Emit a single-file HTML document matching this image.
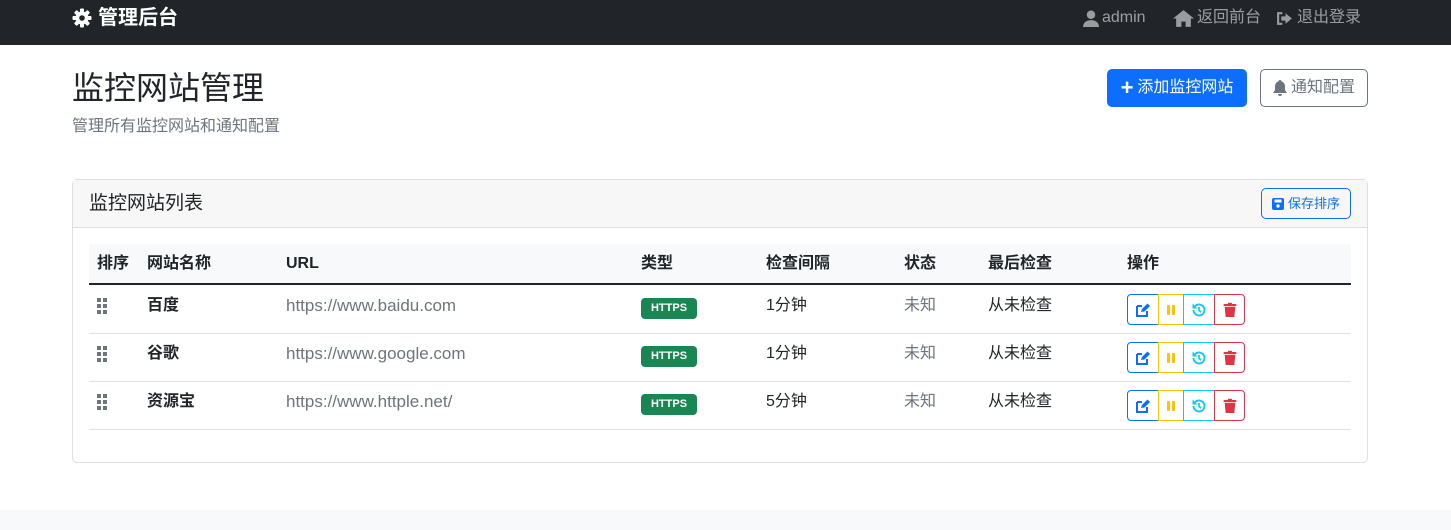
<!DOCTYPE html>
<html><head><meta charset="utf-8"><style>
*{box-sizing:border-box;margin:0;padding:0}
body{width:1451px;height:530px;overflow:hidden;background:#fff;font-family:"Liberation Sans","Noto Sans CJK SC",sans-serif;color:#212529;font-size:16px;position:relative}
.nav{height:45px;background:#212529;position:relative}
.brand{position:absolute;left:72px;top:7px;height:22px;line-height:22px;color:#fff;font-size:20px;font-weight:bold;display:flex;align-items:center;gap:6px}
.nr{position:absolute;top:8px;height:20px;line-height:20px;color:rgba(255,255,255,.55);font-size:16px;display:flex;align-items:center;gap:3px}
h1{position:absolute;left:72px;top:68px;font-size:32px;line-height:40px;font-weight:400}
.sub{position:absolute;left:72px;top:117px;line-height:20px;color:#6c757d;font-size:16px}
.btn{position:absolute;border-radius:5px;display:flex;align-items:center;justify-content:center;gap:4px;line-height:20px}
.card{position:absolute;left:72px;top:179px;width:1296px;height:284px;border:1px solid #dfdfdf;border-radius:5px}
.ch{height:48px;background:#f7f7f7;border-bottom:1px solid #dfdfdf;padding:0 16px;font-size:19px;line-height:47px}
.th{position:absolute;left:89px;top:244px;width:1262px;height:41px;background:#f8f9fa;border-bottom:2px solid #212529}
.t{position:absolute;font-size:16px;line-height:20px;height:20px;display:flex;align-items:center}
.b{font-weight:bold}
.row{position:absolute;left:89px;width:1262px;height:48px;border-bottom:1px solid #dee2e6}
.badge{position:absolute;background:#198754;color:#fff;font-size:11px;font-weight:bold;border-radius:4px;width:56px;height:21px;text-align:center;line-height:21px}
.ab{position:absolute;height:31px;border:1px solid;display:flex;align-items:center;justify-content:center}
.foot{position:absolute;left:0;top:510px;width:1451px;height:20px;background:#f8f9fa}
.grip{position:absolute;left:97px}
</style></head><body>
<div class="nav">
<div class="brand"><svg width="20" height="20" viewBox="0 0 20 20"><g fill="#fff"><circle cx="10" cy="10" r="6.5"/><g id="s"><rect x="8" y="0.5" width="4" height="4" rx="1"/></g><use href="#s" transform="rotate(45 10 10)"/><use href="#s" transform="rotate(90 10 10)"/><use href="#s" transform="rotate(135 10 10)"/><use href="#s" transform="rotate(180 10 10)"/><use href="#s" transform="rotate(225 10 10)"/><use href="#s" transform="rotate(270 10 10)"/><use href="#s" transform="rotate(315 10 10)"/></g><circle cx="10" cy="10" r="2.8" fill="#212529"/></svg><span>管理后台</span></div>
<div class="nr" style="left:1083px"><svg width="16" height="17" viewBox="0 0 15 16" fill="currentColor"><circle cx="7.5" cy="4.5" r="4"/><path d="M0 16c0-4 3-6.5 7.5-6.5S15 12 15 16z"/></svg><span>admin</span></div>
<div class="nr" style="left:1173px"><svg width="21" height="17" viewBox="0 0 20 16" fill="currentColor"><path d="M10 0 0 8h3v8h5v-5h4v5h5V8h3z"/></svg><span>返回前台</span></div>
<div class="nr" style="left:1276px"><svg width="18" height="17" viewBox="0 0 17 16" fill="currentColor"><path d="M1 2h5v2H3v8h3v2H1zM9 3l6 5-6 5V10H5V6h4z"/></svg><span>退出登录</span></div>
</div>
<h1>监控网站管理</h1>
<div class="sub">管理所有监控网站和通知配置</div>
<div class="btn" style="left:1107px;top:69px;width:140px;height:38px;background:#0d6efd;color:#fff;font-size:16px"><span style="font-size:22px;font-weight:bold">+</span><span>添加监控网站</span></div>
<div class="btn" style="left:1260px;top:69px;width:108px;height:38px;border:1px solid #6c757d;color:#6c757d;font-size:16px"><svg width="14" height="16" viewBox="0 0 14 16" fill="currentColor"><path d="M7 0c1 0 1.3.6 1.3 1.3C10.5 2 12 4 12 6.5V10l2 3H0l2-3V6.5C2 4 3.5 2 5.7 1.3 5.7.6 6 0 7 0zM5 14h4a2 2 0 0 1-4 0z"/></svg><span>通知配置</span></div>
<div class="card"><div class="ch">监控网站列表</div></div>
<div class="btn" style="left:1261px;top:188px;width:90px;height:31px;border:1px solid #0d6efd;color:#0d6efd;font-size:13px"><svg width="12" height="12" viewBox="0 0 12 12"><rect width="12" height="12" rx="2" fill="#0d6efd"/><rect x="2.5" y="1.5" width="7" height="3" fill="#fff"/><circle cx="6" cy="8" r="1.7" fill="#fff"/></svg><span>保存排序</span></div>
<div class="th"></div>
<div class="t b" style="left:97px;top:254px">排序</div>
<div class="t b" style="left:147px;top:254px">网站名称</div>
<div class="t b" style="left:286px;top:254px">URL</div>
<div class="t b" style="left:641px;top:254px">类型</div>
<div class="t b" style="left:766px;top:254px">检查间隔</div>
<div class="t b" style="left:904px;top:254px">状态</div>
<div class="t b" style="left:988px;top:254px">最后检查</div>
<div class="t b" style="left:1127px;top:254px">操作</div>

<div class="row" style="top:286px"></div>
<div class="row" style="top:334px"></div>
<div class="row" style="top:382px"></div>

<svg width="0" height="0" style="position:absolute"><defs>
<g id="gr" fill="#6c757d"><rect x="0" y="0" width="4" height="4"/><rect x="6" y="0" width="4" height="4"/><rect x="0" y="6" width="4" height="4"/><rect x="6" y="6" width="4" height="4"/><rect x="0" y="12" width="4" height="4"/><rect x="6" y="12" width="4" height="4"/></g>
<g id="ed"><path d="M2 4h5M2 4v10h10V9" fill="none" stroke="#0d6efd" stroke-width="2"/><path d="M6 10l1-3 5.5-5.5 2.5 2.5-5.5 5.5z" fill="#0d6efd"/></g>
<g id="pa" fill="#ffc107"><rect x="4" y="3" width="3" height="10" rx="1"/><rect x="9" y="3" width="3" height="10" rx="1"/></g>
<g id="hi"><path d="M2.5 8a5.5 5.5 0 1 0 1.6-3.9" fill="none" stroke="#0dcaf0" stroke-width="1.9"/><path d="M1.5 1.5v5h5z" fill="#0dcaf0"/><path d="M8 5v3.5l2.2 1.6" fill="none" stroke="#0dcaf0" stroke-width="1.7"/></g>
<g id="tr" fill="#dc3545"><rect x="1.5" y="2" width="13" height="2.2" rx="1"/><rect x="6" y="0.8" width="4" height="2"/><path d="M2.7 5h10.6l-1 10H3.7z"/></g>
</defs></svg>
<svg class="grip" style="top:298px" width="10" height="16"><use href="#gr"/></svg>
<svg class="grip" style="top:346px" width="10" height="16"><use href="#gr"/></svg>
<svg class="grip" style="top:394px" width="10" height="16"><use href="#gr"/></svg>

<div class="t b" style="left:147px;top:296px">百度</div>
<div class="t b" style="left:147px;top:344px">谷歌</div>
<div class="t b" style="left:147px;top:392px">资源宝</div>
<div class="t" style="left:286px;top:296px;color:#6c757d;font-size:17px">https://www.baidu.com</div>
<div class="t" style="left:286px;top:344px;color:#6c757d;font-size:17px">https://www.google.com</div>
<div class="t" style="left:286px;top:392px;color:#6c757d;font-size:17px">https://www.httple.net/</div>
<div class="badge" style="left:641px;top:298px">HTTPS</div>
<div class="badge" style="left:641px;top:346px">HTTPS</div>
<div class="badge" style="left:641px;top:394px">HTTPS</div>
<div class="t" style="left:766px;top:296px">1分钟</div>
<div class="t" style="left:766px;top:344px">1分钟</div>
<div class="t" style="left:766px;top:392px">5分钟</div>
<div class="t" style="left:904px;top:296px;color:#6c757d">未知</div>
<div class="t" style="left:904px;top:344px;color:#6c757d">未知</div>
<div class="t" style="left:904px;top:392px;color:#6c757d">未知</div>
<div class="t" style="left:988px;top:296px">从未检查</div>
<div class="t" style="left:988px;top:344px">从未检查</div>
<div class="t" style="left:988px;top:392px">从未检查</div>

<div class="ab" style="left:1127px;top:294px;width:32px;border-color:#0d6efd;border-radius:4px 0 0 4px"><svg width="16" height="16"><use href="#ed"/></svg></div>
<div class="ab" style="left:1158px;top:294px;width:26px;border-color:#ffc107"><svg width="16" height="16"><use href="#pa"/></svg></div>
<div class="ab" style="left:1183px;top:294px;width:32px;border-color:#0dcaf0"><svg width="16" height="16"><use href="#hi"/></svg></div>
<div class="ab" style="left:1214px;top:294px;width:31px;border-color:#dc3545;border-radius:0 4px 4px 0"><svg width="16" height="16"><use href="#tr"/></svg></div>
<div class="ab" style="left:1127px;top:342px;width:32px;border-color:#0d6efd;border-radius:4px 0 0 4px"><svg width="16" height="16"><use href="#ed"/></svg></div>
<div class="ab" style="left:1158px;top:342px;width:26px;border-color:#ffc107"><svg width="16" height="16"><use href="#pa"/></svg></div>
<div class="ab" style="left:1183px;top:342px;width:32px;border-color:#0dcaf0"><svg width="16" height="16"><use href="#hi"/></svg></div>
<div class="ab" style="left:1214px;top:342px;width:31px;border-color:#dc3545;border-radius:0 4px 4px 0"><svg width="16" height="16"><use href="#tr"/></svg></div>
<div class="ab" style="left:1127px;top:390px;width:32px;border-color:#0d6efd;border-radius:4px 0 0 4px"><svg width="16" height="16"><use href="#ed"/></svg></div>
<div class="ab" style="left:1158px;top:390px;width:26px;border-color:#ffc107"><svg width="16" height="16"><use href="#pa"/></svg></div>
<div class="ab" style="left:1183px;top:390px;width:32px;border-color:#0dcaf0"><svg width="16" height="16"><use href="#hi"/></svg></div>
<div class="ab" style="left:1214px;top:390px;width:31px;border-color:#dc3545;border-radius:0 4px 4px 0"><svg width="16" height="16"><use href="#tr"/></svg></div>
<div class="foot"></div>
</body></html>
